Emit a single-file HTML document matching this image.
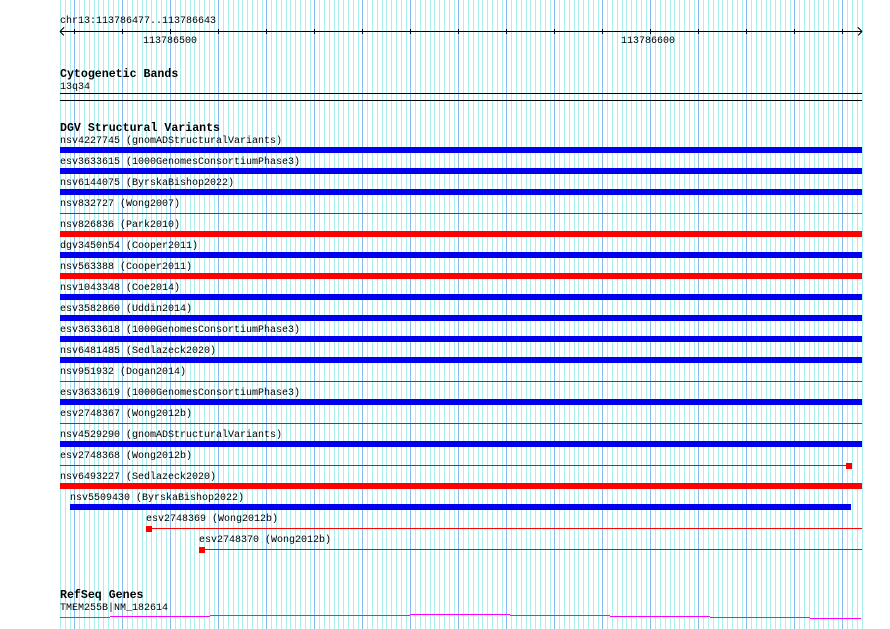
<!DOCTYPE html>
<html><head><meta charset="utf-8"><style>
html,body{margin:0;padding:0;background:#fff;width:890px;height:629px;overflow:hidden;position:relative}
#g{position:absolute;left:0;top:0}
.t{position:absolute;font-family:"Liberation Mono",monospace;font-size:10px;line-height:10px;color:#000;white-space:pre}
.b{position:absolute;font-family:"Liberation Mono",monospace;font-size:11.6px;font-weight:bold;line-height:12px;color:#000;white-space:pre}
</style></head><body>
<svg id="g" width="890" height="629" xmlns="http://www.w3.org/2000/svg" shape-rendering="crispEdges"></svg>
<div class="t" style="left:60px;top:17px">chr13:113786477..113786643</div>
<div class="t" style="left:143px;top:37px">113786500</div>
<div class="t" style="left:621px;top:37px">113786600</div>
<div class="b" style="left:60px;top:69px">Cytogenetic Bands</div>
<div class="t" style="left:60px;top:83px">13q34</div>
<div class="b" style="left:60px;top:123px">DGV Structural Variants</div>
<div id="rows"></div>
<div class="b" style="left:60px;top:590px">RefSeq Genes</div>
<div class="t" style="left:60px;top:604px">TMEM255B|NM_182614</div>
<script>
var s='';
function L(x1,y1,x2,y2,c){s+='<line x1="'+x1+'" y1="'+y1+'" x2="'+x2+'" y2="'+y2+'" stroke="'+c+'" stroke-width="1"/>';}
function R(x,y,w,h,c){s+='<rect x="'+x+'" y="'+y+'" width="'+w+'" height="'+h+'" fill="'+c+'"/>';}
for(var bp=477;bp<=644;bp++){var x=Math.round(60+4.8*(bp-477));if(x>862)break;
 R(x,0,1,629,bp%10==0?'#88bbee':'#aaeeee');}
R(60,31,802,1,'#000');
L(60,31.5,64,27.5,'#000');L(60,31.5,64,35.5,'#000');
L(862,31.5,858,27.5,'#000');L(862,31.5,858,35.5,'#000');
for(var bp=480;bp<=640;bp+=10){var x=Math.round(60+4.8*(bp-477));R(x,29,1,5,'#000');}
R(60,93,802,1,'#000');R(60,100,802,1,'#000');
var rows=[
["nsv4227745 (gnomADStructuralVariants)","B"],
["esv3633615 (1000GenomesConsortiumPhase3)","B"],
["nsv6144075 (ByrskaBishop2022)","B"],
["nsv832727 (Wong2007)","r"],
["nsv826836 (Park2010)","R"],
["dgv3450n54 (Cooper2011)","B"],
["nsv563388 (Cooper2011)","R"],
["nsv1043348 (Coe2014)","B"],
["esv3582860 (Uddin2014)","B"],
["esv3633618 (1000GenomesConsortiumPhase3)","B"],
["nsv6481485 (Sedlazeck2020)","B"],
["nsv951932 (Dogan2014)","r"],
["esv3633619 (1000GenomesConsortiumPhase3)","B"],
["esv2748367 (Wong2012b)","r"],
["nsv4529290 (gnomADStructuralVariants)","B"],
["esv2748368 (Wong2012b)","rs"],
["nsv6493227 (Sedlazeck2020)","R"],
["nsv5509430 (ByrskaBishop2022)","b2"],
["esv2748369 (Wong2012b)","q1"],
["esv2748370 (Wong2012b)","q2"]];
var h='';
rows.forEach(function(r,k){var top=147+21*k,lx=60,t=r[1];
 if(t=='B')R(60,top,802,6,'#0000ee');
 if(t=='R')R(60,top,802,6,'#ff0000');
 if(t=='r')R(60,top+3,802,1,'#ff0000');
 if(t=='rs'){R(60,top+3,788,1,'#ff0000');R(846,top+1,6,6,'#ff0000');}
 if(t=='b2'){lx=70;R(70,top,781,6,'#0000ee');}
 if(t=='q1'){lx=146;R(146,top+1,6,6,'#ff0000');R(152,top+3,710,1,'#ff0000');}
 if(t=='q2'){lx=199;R(199,top+1,6,6,'#ff0000');R(205,top+3,657,1,'#ff0000');}
 h+='<div class="t" style="left:'+lx+'px;top:'+(top-10)+'px">'+r[0]+'</div>';
});
document.getElementById('rows').innerHTML=h;
var segs=[[60,110,617],[110,210,616],[210,310,615],[310,410,615],[410,510,614],[510,610,615],[610,710,616],[710,810,617],[810,861,618]];
segs.forEach(function(g){R(g[0],g[2],g[1]-g[0],1,'#ff00ff');});
document.getElementById('g').innerHTML=s;
</script>
</body></html>
